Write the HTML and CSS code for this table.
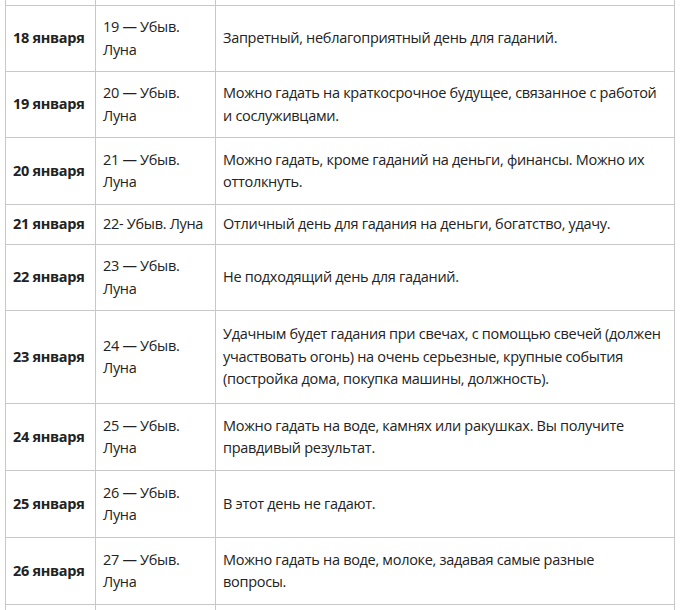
FILE: index.html
```html
<!DOCTYPE html>
<html lang="ru">
<head>
<meta charset="utf-8">
<title>Календарь гаданий</title>
<link rel="stylesheet" href="styles.css">
</head>
<body>
<div class="page">
<table class="grid">
  <colgroup><col class="c1"><col class="c2"><col class="c3"></colgroup>
  <tr class="filler"><td></td><td></td><td></td></tr>
  <tr class="r66"><td class="day">18 января</td><td>19 — Убыв.<br>Луна</td><td>Запретный, неблагоприятный день для гаданий.</td></tr>
  <tr class="r66"><td class="day">19 января</td><td>20 — Убыв.<br>Луна</td><td>Можно гадать на краткосрочное будущее, связанное с работой<br>и сослуживцами.</td></tr>
  <tr class="r67"><td class="day">20 января</td><td>21 — Убыв.<br>Луна</td><td>Можно гадать, кроме гаданий на деньги, финансы. Можно их<br>оттолкнуть.</td></tr>
  <tr class="r40"><td class="day">21 января</td><td>22- Убыв. Луна</td><td>Отличный день для гадания на деньги, богатство, удачу.</td></tr>
  <tr class="r66"><td class="day">22 января</td><td>23 — Убыв.<br>Луна</td><td>Не подходящий день для гаданий.</td></tr>
  <tr class="r93"><td class="day">23 января</td><td>24 — Убыв.<br>Луна</td><td>Удачным будет гадания при свечах, с помощью свечей (должен<br>участвовать огонь) на очень серьезные, крупные события<br>(постройка дома, покупка машины, должность).</td></tr>
  <tr class="r67"><td class="day">24 января</td><td>25 — Убыв.<br>Луна</td><td>Можно гадать на воде, камнях или ракушках. Вы получите<br>правдивый результат.</td></tr>
  <tr class="r67"><td class="day">25 января</td><td>26 — Убыв.<br>Луна</td><td>В этот день не гадают.</td></tr>
  <tr class="r67"><td class="day">26 января</td><td>27 — Убыв.<br>Луна</td><td>Можно гадать на воде, молоке, задавая самые разные<br>вопросы.</td></tr>
  <tr class="filler"><td></td><td></td><td></td></tr>
</table>
</div>
</body>
</html>
```

FILE: styles.css
```css
html, body {
  margin: 0;
  padding: 0;
  background: #fff;
}
.page {
  height: 610px;
  overflow: hidden;
  padding-left: 5px;
}
.grid {
  border-collapse: collapse;
  table-layout: fixed;
  width: 669px;
  margin-top: -25px;
  font-family: "Open Sans", "Noto Sans", sans-serif;
  font-size: 14.5px;
  letter-spacing: -0.3px;
  line-height: 22.5px;
  color: #222;
}
.c1 { width: 90px; }
.c2 { width: 120px; }
.c3 { width: 459px; }
.grid td {
  border: 1px solid #c8c8c8;
  padding: 0 7px 0 7px;
  vertical-align: middle;
}
.grid td.day {
  font-weight: 700;
}
.filler { height: 30px; }
.r40 { height: 40px; }
.r66 { height: 66px; }
.r67 { height: 67px; }
.r93 { height: 93px; }
```
